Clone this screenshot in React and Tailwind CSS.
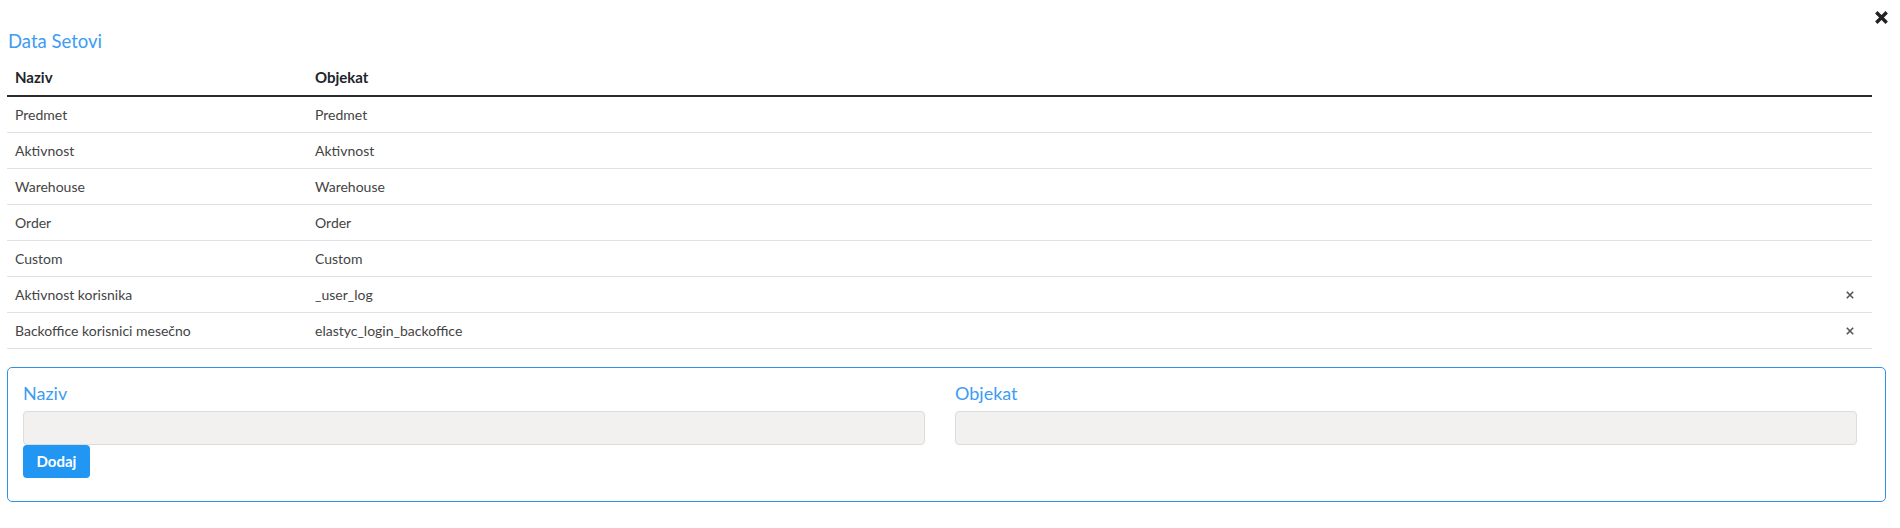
import React from 'react'

const rows = [
  { naziv: 'Predmet', objekat: 'Predmet' },
  { naziv: 'Aktivnost', objekat: 'Aktivnost' },
  { naziv: 'Warehouse', objekat: 'Warehouse' },
  { naziv: 'Order', objekat: 'Order' },
  { naziv: 'Custom', objekat: 'Custom' },
  { naziv: 'Aktivnost korisnika', objekat: '_user_log', removable: true },
  { naziv: 'Backoffice korisnici mesečno', objekat: 'elastyc_login_backoffice', removable: true },
]

function XIcon({ size, stroke, color }) {
  return (
    <svg width={size} height={size} viewBox="0 0 10 10" fill="none">
      <path d="M1 1L9 9M9 1L1 9" stroke={color} strokeWidth={stroke} strokeLinecap="butt" />
    </svg>
  )
}

export default function App() {
  return (
    <div className="relative w-full bg-white py-[7px] pl-[7px] pr-[14px] font-['Lato','Noto_Sans',sans-serif]">
      {/* Close */}
      <button className="absolute right-[12px] top-[10px] flex h-[14px] w-[14px] items-center justify-center">
        <XIcon size={13} stroke={2.6} color="#222" />
      </button>

      <h5 className="mt-[23px] pl-[1px] text-[18.5px] leading-[22px] text-[#3d9cf3]">Data Setovi</h5>

      {/* Table */}
      <div className="mr-[14px]">
        <div className="flex h-[45px] items-end border-b-2 border-[#2b2b2b] pb-[8px] text-[15px] font-bold leading-[20px] text-[#212529]">
          <div className="w-[308px] pl-[8px]">Naziv</div>
          <div className="flex-1">Objekat</div>
        </div>
        {rows.map((r) => (
          <div
            key={r.naziv}
            className="flex h-[36px] items-center border-b border-[#dee2e6] text-[14px] text-[#444]"
          >
            <div className="w-[308px] pl-[8px]">{r.naziv}</div>
            <div className="flex-1">{r.objekat}</div>
            <div className="flex w-[40px] justify-center pr-[4px]">
              {r.removable && <XIcon size={8} stroke={2} color="#555" />}
            </div>
          </div>
        ))}
      </div>

      {/* Form */}
      <div className="mt-[18px] rounded-[5px] border border-[#3391e3] pb-[23px] pl-[15px] pr-[28px] pt-[14px]">
        <div className="grid grid-cols-2 gap-x-[30px]">
          <div>
            <label className="block text-[18px] leading-[22px] text-[#3d9cf3]">Naziv</label>
            <input className="mt-[7px] block h-[34px] w-full rounded-[4px] border border-[#dcdcdc] bg-[#f2f1f0] px-3 outline-none" />
            <button className="flex h-[33px] w-[67px] items-center justify-center rounded-[4px] bg-[#2196f3] text-[15px] font-bold text-white">
              Dodaj
            </button>
          </div>
          <div>
            <label className="block text-[18px] leading-[22px] text-[#3d9cf3]">Objekat</label>
            <input className="mt-[7px] block h-[34px] w-full rounded-[4px] border border-[#dcdcdc] bg-[#f2f1f0] px-3 outline-none" />
          </div>
        </div>
      </div>
    </div>
  )
}
